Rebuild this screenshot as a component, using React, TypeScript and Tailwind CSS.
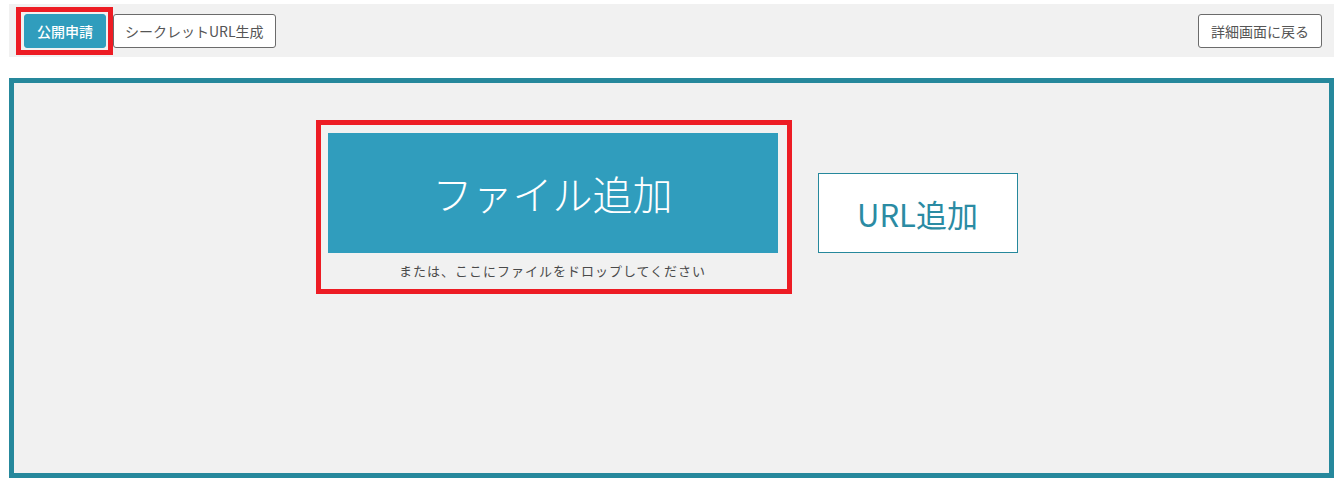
import React from 'react';

const FONT = "font-['Noto_Sans_CJK_JP','Noto_Sans',sans-serif]";

export default function App() {
  return (
    <div className={`${FONT} bg-white min-h-[479px] pt-[4px] pl-[9px] pr-[1px]`}>
      {/* Toolbar */}
      <div className="flex items-center justify-between bg-[#f1f1f1] h-[53px] pl-[15px] pr-[12px]">
        <div className="flex items-center gap-[7px]">
          <div className="relative">
            <button className="h-[34px] px-[12px] rounded-[3px] border border-[#309dbd] bg-[#309dbd] text-white text-[14px] leading-none font-medium">
              公開申請
            </button>
            {/* highlight */}
            <div className="absolute -left-[8px] -right-[7px] -top-[7px] -bottom-[7px] border-[5px] border-[#ed1c24] pointer-events-none" />
          </div>
          <button className="h-[34px] px-[11px] rounded-[3px] border border-[#6b6b6b] bg-white text-[#555] text-[14px] leading-none">
            シークレットURL生成
          </button>
        </div>
        <button className="h-[34px] px-[12px] rounded-[3px] border border-[#6b6b6b] bg-white text-[#555] text-[14px] leading-none">
          詳細画面に戻る
        </button>
      </div>

      {/* Upload panel */}
      <div className="mt-[21px] h-[400px] border-[5px] border-[#26889c] bg-[#f1f1f1]">
        <div className="flex justify-center items-start gap-[40px] pt-[50px] pl-[2px]">
          <div className="relative w-[450px]">
            <button className="w-[450px] h-[120px] bg-[#309dbd] text-white text-[40px] font-light leading-none">
              ファイル追加
            </button>
            <div className="mt-[8px] h-[20px] text-center text-[13px] tracking-[1px] leading-[20px] text-[#4a4a4a]">
              または、ここにファイルをドロップしてください
            </div>
            {/* highlight */}
            <div className="absolute -left-[12px] -right-[14px] -top-[13px] -bottom-[13px] border-[5px] border-[#ed1c24] pointer-events-none" />
          </div>
          <button className="mt-[40px] w-[200px] h-[80px] bg-white border border-[#26889c] text-[#2b8ba3] text-[31px] leading-none">
            URL追加
          </button>
        </div>
      </div>
    </div>
  );
}
